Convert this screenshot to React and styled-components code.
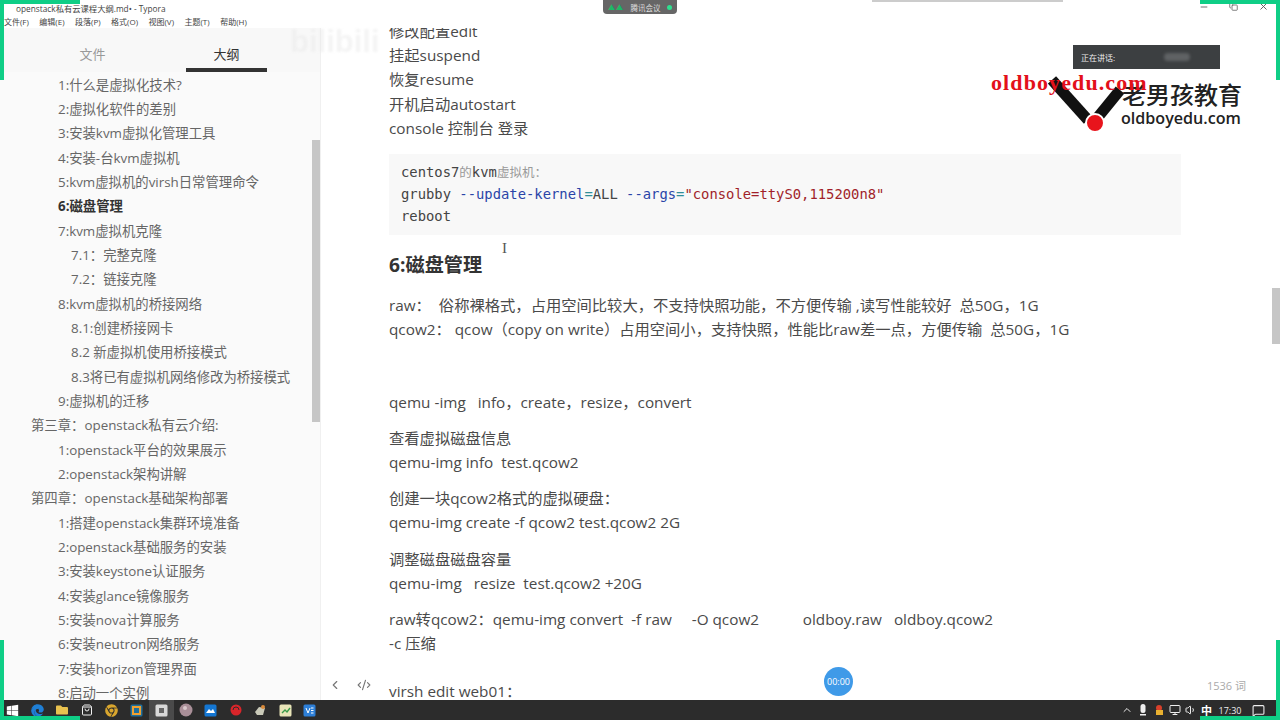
import React from 'react';
import styled, { createGlobalStyle } from 'styled-components';
import { FaWindows, FaEdge, FaChrome, FaFolder } from 'react-icons/fa';
import { ChevronLeft, CodeXml, ChevronUp, Monitor, Volume1, MessageSquare, Minus, Copy, X, ShoppingBag } from 'lucide-react';

const UI = `"Open Sans", "Noto Sans CJK SC", sans-serif`;

const Global = createGlobalStyle`
  html, body { margin: 0; padding: 0; background: #fff; }
  body { font-family: ${UI}; overflow: hidden; }
  * { box-sizing: border-box; }
`;

const Page = styled.div`
  position: relative; width: 1280px; height: 720px; overflow: hidden;
  display: flex; flex-direction: column; background: #fff;
`;
const TitleBar = styled.div`
  height: 16px; display: flex; align-items: center; padding: 0 8px 0 16px;
  font-size: 8.3px; color: #444; justify-content: space-between;
`;
const WindowButtons = styled.div`
  display: flex; gap: 20px; align-items: center; color: #555; margin-top: -3px; padding-right: 3px;
`;
const MenuBar = styled.div`
  height: 12px; display: flex; gap: 10.5px; padding-left: 4px; align-items: center;
  font-size: 8px; color: #444; line-height: 12px;
`;
const Body = styled.div`
  flex: 1; min-height: 0; display: flex;
`;
const Sidebar = styled.aside`
  position: relative; width: 321px; background: #fafafa; display: flex; flex-direction: column;
  border-right: 1px solid #f0f0f0;
`;
const Tabs = styled.div`
  height: 44px; flex: none; display: flex; padding-left: 52px; gap: 53px; background: #f8f8f8;
`;
const Tab = styled.div`
  width: 81px; height: 44px; padding-top: 16px; text-align: center; font-size: 13px; line-height: 20px;
  color: ${p => (p.$active ? '#333' : '#999')};
  border-bottom: 4px solid ${p => (p.$active ? '#333' : 'transparent')};
`;
const Outline = styled.div`
  flex: 1; min-height: 0; overflow: hidden; padding-top: 0.5px;
`;
const OutlineItem = styled.div`
  height: 24.35px; line-height: 24.35px; font-size: 13.37px; white-space: nowrap;
  color: ${p => (p.$active ? '#333' : '#666')};
  font-weight: ${p => (p.$active ? 700 : 400)};
  padding-left: ${p => ({ 1: 31, 2: 58, 3: 71 }[p.$level])}px;
`;
const Thumb = styled.div`
  position: absolute; right: 0; top: 112px; width: 8px; height: 282px; background: #c6c6c6;
`;
const Main = styled.main`
  position: relative; flex: 1; min-width: 0; overflow: hidden; background: #fff;
`;
const Article = styled.article`
  width: 860px; padding: 0 0 0 68px; margin-top: -9px;
  font-size: 15.3px; line-height: 24.2px; color: #4a4a4a;
`;
const Para = styled.p`
  margin: 0 0 ${p => p.$after ?? 12}px; white-space: pre;
`;
const CodeBlock = styled.pre`
  margin: 14px 0 0; padding: 7px 12px; height: 81px; background: #f8f8f8;
  font-family: "DejaVu Sans Mono", "Noto Sans CJK SC", monospace; font-size: 13.85px; line-height: 22px; color: #444;
`;
const CodeCjk = styled.span`color: #999; font-size: 12.5px; line-height: 1;`;
const Attr = styled.span`color: #2a45a8;`;
const Str = styled.span`color: #a11f2a;`;
const Op = styled.span`color: #2f8f9a;`;
const Heading = styled.h2`
  margin: 18px 0 16px; font-size: 19.2px; line-height: 24px; font-weight: 700; color: #333;
`;
const Footer = styled.div`
  position: absolute; left: 0; right: 0; bottom: 0; height: 28px; display: flex; align-items: center;
  padding: 0 34px 0 7px; color: #777; pointer-events: none;
`;
const FooterIcons = styled.div`
  display: flex; gap: 15px; align-items: center; flex: 1; margin-top: -2px;
`;
const WordCount = styled.span`
  font-size: 11px; color: #aaa; margin-top: -3px;
`;
const MainThumb = styled.div`
  position: absolute; right: 0; top: 260px; width: 8px; height: 56px; background: #c6c6c6;
`;
const Caret = styled.span`
  position: absolute; left: 181px; top: 212px; color: #555; font: 15px "Liberation Serif", serif;
`;
const Timer = styled.div`
  position: absolute; left: 824px; top: 667px; width: 29px; height: 29px; border-radius: 50%;
  background: #3f9ae8; color: #fff; font-size: 9px; display: flex; align-items: center; justify-content: center;
`;
const Taskbar = styled.footer`
  height: 20px; flex: none; background: #2c2c2c; display: flex; align-items: center; color: #eee;
`;
const TaskSlot = styled.div`
  width: 24.8px; height: 20px; display: flex; align-items: center; justify-content: center; flex: none;
  background: ${p => (p.$active ? '#4a4a4a' : 'transparent')};
`;
const TaskIcons = styled.div`
  display: flex; flex: 1;
`;
const Tray = styled.div`
  display: flex; align-items: center; gap: 4px; padding-right: 15.5px; font-size: 9px; color: #eee;
`;
const Ime = styled.span`font-size: 11px; font-weight: 700; color: #fff;`;
const Clock = styled.span`font-size: 9px; margin: 0 6px 0 2.5px;`;
const Corner = styled.div`
  position: absolute; width: 80px; height: 80px; pointer-events: none;
  ${p => (p.$v === 'top' ? 'top: 0; border-top: 4px solid #0fce86;' : 'bottom: 0; border-bottom: 4px solid #0fce86;')}
  ${p => (p.$h === 'left' ? 'left: 0; border-left: 4px solid #0fce86;' : 'right: 0; border-right: 4px solid #0fce86;')}
`;
const MeetingPill = styled.div`
  position: absolute; left: 603px; top: 0; width: 74px; height: 14px; background: #666;
  border-radius: 0 0 4px 4px; display: flex; align-items: center; gap: 3px; padding: 0 5px;
  color: #ddd; font-size: 7.5px; justify-content: space-between;
`;
const Signal = styled.span`color: #1fb866; font-size: 7px; letter-spacing: 1px;`;
const GreenDot = styled.span`width: 5px; height: 5px; border-radius: 50%; background: #2fe08f;`;
const TopEdge = styled.div`
  position: absolute; left: 872px; top: 0; width: 191px; height: 2px; background: #ccc;
`;
const Speaking = styled.div`
  position: absolute; left: 1073px; top: 45px; width: 147px; height: 24px; background: #3c3f41;
  color: #eee; font-size: 8px; display: flex; align-items: center; padding-left: 8px; gap: 49px;
`;
const Blur = styled.span`
  width: 26px; height: 8px; border-radius: 4px; background: #5f6264; filter: blur(1.5px);
`;
const Watermark = styled.div`
  position: absolute; left: 290px; top: 24px; font: 700 31px "Liberation Sans", sans-serif; color: #e9e9e9; opacity: .5;
  filter: blur(1px); pointer-events: none;
`;
const LogoUrl = styled.div`
  position: absolute; left: 991px; top: 69px; font: 700 22px/28px "Liberation Serif", serif; letter-spacing: 1.1px; color: #e3101a; z-index: 2;
`;
const LogoMark = styled.svg`
  position: absolute; left: 1048px; top: 74px;
`;
const LogoCn = styled.div`
  position: absolute; left: 1122px; top: 80px; font-size: 24px; line-height: 30px; font-weight: 500; color: #222;
`;
const LogoEn = styled.div`
  position: absolute; left: 1121px; top: 105px; font: 600 16.1px/26px "Open Sans", sans-serif; color: #222;
`;

const outline = [
  [2, '1:什么是虚拟化技术?'], [2, '2:虚拟化软件的差别'], [2, '3:安装kvm虚拟化管理工具'], [2, '4:安装-台kvm虚拟机'],
  [2, '5:kvm虚拟机的virsh日常管理命令'], [2, '6:磁盘管理', true], [2, '7:kvm虚拟机克隆'], [3, '7.1：完整克隆'], [3, '7.2：链接克隆'],
  [2, '8:kvm虚拟机的桥接网络'], [3, '8.1:创建桥接网卡'], [3, '8.2 新虚拟机使用桥接模式'], [3, '8.3将已有虚拟机网络修改为桥接模式'],
  [2, '9:虚拟机的迁移'], [1, '第三章：openstack私有云介绍:'], [2, '1:openstack平台的效果展示'], [2, '2:openstack架构讲解'],
  [1, '第四章：openstack基础架构部署'], [2, '1:搭建openstack集群环境准备'], [2, '2:openstack基础服务的安装'], [2, '3:安装keystone认证服务'],
  [2, '4:安装glance镜像服务'], [2, '5:安装nova计算服务'], [2, '6:安装neutron网络服务'], [2, '7:安装horizon管理界面'], [2, '8:启动一个实例'],
];

const menus = ['文件(F)', '编辑(E)', '段落(P)', '格式(O)', '视图(V)', '主题(T)', '帮助(H)'];

const Tile = ({ bg, children }) => (
  <svg width="13" height="13" viewBox="0 0 13 13">
    <rect x="0.5" y="0.5" width="12" height="12" rx="1.5" fill={bg} />
    {children}
  </svg>
);

const taskIcons = [
  <FaWindows size={13} color="#fff" />,
  <FaEdge size={13} color="#1f7fd6" />,
  <FaFolder size={12} color="#e8c14f" />,
  <ShoppingBag size={12} color="#f2f2f2" />,
  <FaChrome size={13} color="#d9a62e" />,
  <Tile bg="#1f6f9c"><rect x="3" y="3" width="7" height="7" fill="none" stroke="#f0a030" strokeWidth="2" /></Tile>,
  <Tile bg="#d9d9d9"><rect x="4" y="4" width="5" height="5" fill="#666" /></Tile>,
  <svg width="14" height="14" viewBox="0 0 14 14"><circle cx="7" cy="7" r="6.5" fill="#a98f98" /><circle cx="6" cy="5" r="2" fill="#d8c8cc" /></svg>,
  <Tile bg="#1476d2"><path d="M2 9l3-4 2 2 2-2 2 4z" fill="#fff" /></Tile>,
  <svg width="14" height="14" viewBox="0 0 14 14"><circle cx="7" cy="7" r="5.5" fill="#d9252a" /><path d="M4 7a3 3 0 0 1 6 0" stroke="#2c2c2c" fill="none" /></svg>,
  <svg width="14" height="14" viewBox="0 0 14 14"><path d="M2 9l4-5 6 1-2 7H4z" fill="#c9c9b8" /><circle cx="10" cy="4" r="2" fill="#d98a3a" /></svg>,
  <Tile bg="#e8e4b8"><path d="M3 9l3-3 2 2 3-4" stroke="#3a9a4a" fill="none" strokeWidth="1.4" /></Tile>,
  <Tile bg="#2d7fd8"><path d="M3 4l2 5 2-5M8 9h2.5M8 6.5h2.5M8 4h2.5" stroke="#fff" fill="none" /></Tile>,
];

export default function App() {
  return (
    <Page>
      <Global />
      <TitleBar>
        <span>openstack私有云课程大纲.md• - Typora</span>
        <WindowButtons>
          <Minus size={10} />
          <Copy size={9} />
          <X size={11} />
        </WindowButtons>
      </TitleBar>
      <MenuBar>{menus.map(m => <span key={m}>{m}</span>)}</MenuBar>
      <Body>
        <Sidebar>
          <Tabs>
            <Tab>文件</Tab>
            <Tab $active>大纲</Tab>
          </Tabs>
          <Outline>
            {outline.map(([level, text, active]) => (
              <OutlineItem key={text + level} $level={level} $active={active}>{text}</OutlineItem>
            ))}
          </Outline>
          <Thumb />
        </Sidebar>
        <Main>
          <Article>
            <Para $after={0}>修改配置edit</Para>
            <Para $after={0}>挂起suspend</Para>
            <Para $after={0}>恢复resume</Para>
            <Para $after={0}>开机启动autostart</Para>
            <Para $after={0}>console 控制台 登录</Para>
            <CodeBlock>
              centos7<CodeCjk>的</CodeCjk>kvm<CodeCjk>虚拟机：</CodeCjk>{'\n'}
              grubby <Attr>--update-kernel</Attr><Op>=</Op>ALL <Attr>--args</Attr><Op>=</Op><Str>"console=ttyS0,115200n8"</Str>{'\n'}
              reboot
            </CodeBlock>
            <Heading>6:磁盘管理</Heading>
            <Para $after={0}>raw：  俗称裸格式，占用空间比较大，不支持快照功能，不方便传输 ,读写性能较好  总50G，1G</Para>
            <Para>qcow2： qcow（copy on write）占用空间小，支持快照，性能比raw差一点，方便传输  总50G，1G</Para>
            <Para>{' '}</Para>
            <Para>qemu -img   info，create，resize，convert</Para>
            <Para $after={0}>查看虚拟磁盘信息</Para>
            <Para>qemu-img info  test.qcow2</Para>
            <Para $after={0}>创建一块qcow2格式的虚拟硬盘：</Para>
            <Para>qemu-img create -f qcow2 test.qcow2 2G</Para>
            <Para $after={0}>调整磁盘磁盘容量</Para>
            <Para>qemu-img   resize  test.qcow2 +20G</Para>
            <Para $after={0}>raw转qcow2：qemu-img convert  -f raw     -O qcow2           oldboy.raw   oldboy.qcow2</Para>
            <Para $after={24}>-c 压缩</Para>
            <Para>virsh edit web01：</Para>
          </Article>
          <Caret>I</Caret>
          <Footer>
            <FooterIcons>
              <ChevronLeft size={14} />
              <CodeXml size={14} />
            </FooterIcons>
            <WordCount>1536 词</WordCount>
          </Footer>
          <MainThumb />
        </Main>
      </Body>
      <Taskbar>
        <TaskIcons>
          {taskIcons.map((icon, i) => (
            <TaskSlot key={i} $active={i === 6}>{icon}</TaskSlot>
          ))}
        </TaskIcons>
        <Tray>
          <ChevronUp size={12} />
          <svg width="12" height="12" viewBox="0 0 12 12"><rect x="3.5" y="0" width="5" height="9" rx="2.5" fill="#eee" /><rect x="3" y="10" width="6" height="1.5" fill="#eee" /></svg>
          <svg width="12" height="12" viewBox="0 0 12 12"><circle cx="6" cy="4" r="3" fill="#d9402a" /><rect x="3" y="6" width="7" height="5" fill="#e8b030" /></svg>
          <Monitor size={12} />
          <Volume1 size={12} />
          <Ime>中</Ime>
          <Clock>17:30</Clock>
          <MessageSquare size={13} />
        </Tray>
      </Taskbar>

      <Timer>00:00</Timer>
      <Watermark>bilibili</Watermark>
      <MeetingPill><Signal>▲▲</Signal><span>腾讯会议</span><GreenDot /></MeetingPill>
      <TopEdge />
      <Speaking><span>正在讲话:</span><Blur /></Speaking>
      <LogoMark width="85" height="62" viewBox="0 0 85 62">
        <path d="M4 6L40 46" stroke="#111" strokeWidth="11" />
        <path d="M72 16L50 43" stroke="#111" strokeWidth="11" />
        <circle cx="47" cy="49" r="9" fill="#e8141c" stroke="#fff" strokeWidth="2" />
      </LogoMark>
      <LogoUrl>oldboyedu.com</LogoUrl>
      <LogoCn>老男孩教育</LogoCn>
      <LogoEn>oldboyedu.com</LogoEn>
      <Corner $v="top" $h="left" />
      <Corner $v="top" $h="right" />
      <Corner $v="bottom" $h="left" />
      <Corner $v="bottom" $h="right" />
    </Page>
  );
}
